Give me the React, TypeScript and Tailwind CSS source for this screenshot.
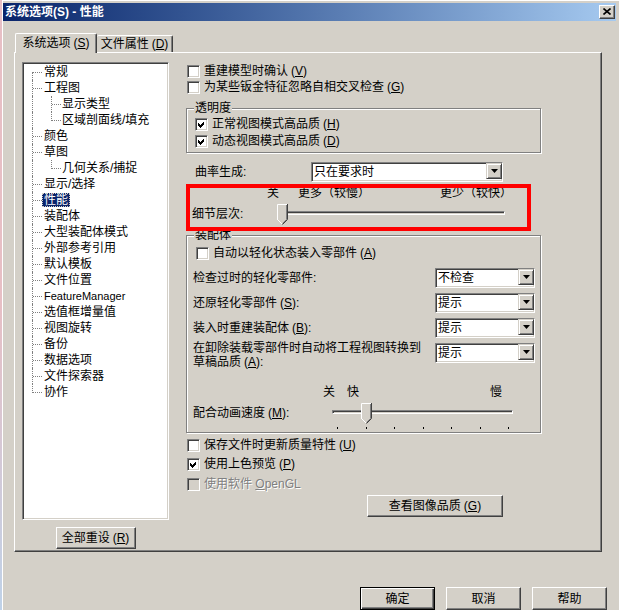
import React from 'react';

const raised =
  'border border-t-white border-l-white border-r-[#404040] border-b-[#404040] shadow-[inset_-1px_-1px_0_#808080]';
const sunken =
  'border border-t-[#808080] border-l-[#808080] border-r-white border-b-white shadow-[inset_1px_1px_0_#404040,inset_-1px_-1px_0_#d4d0c8]';
const etched = 'border border-[#808080] shadow-[inset_1px_1px_0_#fff,1px_1px_0_#fff]';

const Key = ({ k }: { k: string }) => (
  <span className="ml-[3px]">
    (<span className="underline">{k}</span>)
  </span>
);

const Check = ({ checked, disabled }: { checked?: boolean; disabled?: boolean }) => (
  <span
    className={`w-[13px] h-[13px] shrink-0 flex items-center justify-center ${sunken} ${
      disabled ? 'bg-[#d4d0c8]' : 'bg-white'
    }`}
  >
    {checked && (
      <svg width="7" height="7" viewBox="0 0 7 7" shapeRendering="crispEdges">
        <path d="M0 2L2 4L6 0V3L2 7L0 5Z" fill="#000" />
      </svg>
    )}
  </span>
);

const CheckRow = ({
  label,
  checked,
  disabled,
  className = '',
}: {
  label: React.ReactNode;
  checked?: boolean;
  disabled?: boolean;
  className?: string;
}) => (
  <div className={`flex items-center h-[13px] gap-[4px] ${className}`}>
    <Check checked={checked} disabled={disabled} />
    <span className={disabled ? 'text-[#808080] [text-shadow:1px_1px_0_#fff]' : ''}>{label}</span>
  </div>
);

const Combo = ({ value, className }: { value: string; className: string }) => (
  <div className={`flex h-[20px] bg-white ${sunken} ${className}`}>
    <span className="flex-1 pl-[2px] flex items-center">{value}</span>
    <span className="w-[16px] h-[16px] flex items-center justify-center bg-[#d4d0c8] border border-t-[#d4d0c8] border-l-[#d4d0c8] border-r-[#404040] border-b-[#404040] shadow-[inset_1px_1px_0_#fff,inset_-1px_-1px_0_#808080]">
      <svg width="7" height="4" viewBox="0 0 7 4">
        <path d="M0 0H7L3.5 4Z" fill="#000" />
      </svg>
    </span>
  </div>
);

const Thumb = () => (
  <svg width="11" height="21" viewBox="0 0 11 21">
    <path d="M0 0H11V16L5.5 21L0 16Z" fill="#d4d0c8" />
    <polyline points="0.5,16 0.5,0.5 10,0.5" fill="none" stroke="#fff" />
    <polyline points="0.5,15.5 5,20" fill="none" stroke="#fff" />
    <polyline points="9.5,1 9.5,15.5 5.5,19.5" fill="none" stroke="#808080" />
    <polyline points="10.5,0 10.5,15.5 5.5,20.5" fill="none" stroke="#404040" />
  </svg>
);

const Slider = ({ width, thumb }: { width: string; thumb: string }) => (
  <div className={`relative h-[21px] ${width}`}>
    <div className="absolute left-0 right-0 top-[7px] h-[4px] border border-t-[#808080] border-l-[#808080] border-r-white border-b-white shadow-[inset_1px_1px_0_#404040]" />
    <div className={`absolute top-0 ${thumb}`}>
      <Thumb />
    </div>
  </div>
);

const Group = ({
  title,
  className,
  children,
}: {
  title: string;
  className: string;
  children: React.ReactNode;
}) => (
  <div className={`relative flex flex-col ${etched} ${className}`}>
    <span className="absolute -top-[8px] left-[7px] px-[1px] bg-[#d4d0c8]">{title}</span>
    {children}
  </div>
);

const Button = ({
  children,
  className,
  primary,
}: {
  children: React.ReactNode;
  className: string;
  primary?: boolean;
}) => (
  <button
    type="button"
    className={`flex items-center justify-center bg-[#d4d0c8] ${
      primary
        ? 'border border-black shadow-[inset_1px_1px_0_#fff,inset_-1px_-1px_0_#404040,inset_-2px_-2px_0_#808080]'
        : raised
    } ${className}`}
  >
    {children}
  </button>
);

const tree = [
  { label: '常规', level: 0 },
  { label: '工程图', level: 0 },
  { label: '显示类型', level: 1 },
  { label: '区域剖面线/填充', level: 1, lastChild: true },
  { label: '颜色', level: 0 },
  { label: '草图', level: 0 },
  { label: '几何关系/捕捉', level: 1, lastChild: true },
  { label: '显示/选择', level: 0 },
  { label: '性能', level: 0, selected: true },
  { label: '装配体', level: 0 },
  { label: '大型装配体模式', level: 0 },
  { label: '外部参考引用', level: 0 },
  { label: '默认模板', level: 0 },
  { label: '文件位置', level: 0 },
  { label: 'FeatureManager', level: 0 },
  { label: '选值框增量值', level: 0 },
  { label: '视图旋转', level: 0 },
  { label: '备份', level: 0 },
  { label: '数据选项', level: 0 },
  { label: '文件探索器', level: 0 },
  { label: '协作', level: 0 },
];

const Tree = () => (
  <div className={`w-full h-[458px] bg-white ${sunken} pt-[1px] pl-[1px]`}>
    {tree.map((item, i) => {
      const last = i === tree.length - 1;
      return (
        <div key={i} className="relative h-[16px] flex items-center">
          <span
            className={`absolute left-[8px] border-l border-dotted border-[#808080] ${
              i === 0 ? 'top-[8px] bottom-0' : last ? 'top-0 h-[9px]' : 'top-0 bottom-0'
            }`}
          />
          {item.level === 0 ? (
            <span className="absolute left-[9px] top-[8px] w-[9px] border-t border-dotted border-[#808080]" />
          ) : (
            <>
              <span
                className={`absolute left-[27px] top-0 border-l border-dotted border-[#808080] ${
                  item.lastChild ? 'h-[9px]' : 'bottom-0'
                }`}
              />
              <span className="absolute left-[28px] top-[8px] w-[9px] border-t border-dotted border-[#808080]" />
            </>
          )}
          {item.selected ? (
            <span className="ml-[18px] px-[2px] h-[14px] bg-[#0a246a] text-white outline-1 outline-dotted outline-[#d4d0c8] -outline-offset-1">
              {item.label}
            </span>
          ) : (
            <span
              className={`${item.level === 0 ? 'ml-[20px]' : 'ml-[38px]'} ${
                item.label === 'FeatureManager' ? 'text-[11px]' : ''
              }`}
            >
              {item.label}
            </span>
          )}
        </div>
      );
    })}
  </div>
);

export default function App() {
  return (
    <div className="relative flex w-[619px] h-[610px] overflow-hidden bg-[#d4d0c8] text-black text-[12px] leading-[14px] font-['Liberation_Sans','Noto_Sans_CJK_SC',sans-serif]">
      <div className="w-[2px] shrink-0 bg-gradient-to-b from-[#e7bfc5] via-[#e7bfc5] to-[#bfd2e8]" />
      <div className="flex-1 flex flex-col shadow-[inset_1px_1px_0_#fff]">
        {/* title bar */}
        <div className="mt-[3px] ml-[1px] mr-[3px] h-[18px] flex items-center justify-between pl-[2px] pr-[1px] bg-gradient-to-r from-[#0a246a] to-[#a6caf0]">
          <span className="text-white font-bold">系统选项(S) - 性能</span>
          <span className={`w-[16px] h-[14px] flex items-center justify-center bg-[#d4d0c8] ${raised}`}>
            <svg width="8" height="7" viewBox="0 0 8 7">
              <path d="M0.5 0.5L7.5 6.5M7.5 0.5L0.5 6.5" stroke="#000" strokeWidth="1.6" />
            </svg>
          </span>
        </div>

        {/* tabs */}
        <div className="relative z-10 flex items-end mt-[12px] ml-[13px] h-[20px]">
          <div className="w-[82px] h-[20px] flex items-center justify-center bg-[#d4d0c8] border-t border-l border-r border-t-white border-l-white border-r-[#404040] rounded-t-[2px] shadow-[inset_-1px_0_0_#808080]">
            系统选项<Key k="S" />
          </div>
          <div className="w-[76px] h-[17px] mb-[1px] flex items-center justify-center bg-[#d4d0c8] border-t border-r border-t-white border-r-[#404040] rounded-t-[2px] shadow-[inset_-1px_0_0_#808080]">
            文件属性<Key k="D" />
          </div>
        </div>

        {/* tab panel */}
        <div className={`-mt-[1px] ml-[12px] w-[588px] h-[501px] flex ${raised}`}>
          <div className="ml-[7px] mt-[9px] w-[147px] flex flex-col items-center">
            <Tree />
            <Button className="mt-[7px] w-[80px] h-[22px]">
              全部重设<Key k="R" />
            </Button>
          </div>

          <div className="ml-[17px] w-[355px] flex flex-col">
            <CheckRow className="mt-[12px] pl-[1px]" label={<>重建模型时确认<Key k="V" /></>} />
            <CheckRow className="mt-[3px] pl-[1px]" label={<>为某些钣金特征忽略自相交叉检查<Key k="G" /></>} />

            <Group title="透明度" className="mt-[14px] h-[45px] pl-[8px]">
              <CheckRow className="mt-[9px]" checked label={<>正常视图模式高品质<Key k="H" /></>} />
              <CheckRow className="mt-[4px]" checked label={<>动态视图模式高品质<Key k="D" /></>} />
            </Group>

            <div className="mt-[9px] flex items-center pl-[9px]">
              <span className="w-[116px]">曲率生成:</span>
              <Combo value="只在要求时" className="w-[192px]" />
            </div>

            <div className="mt-[4px] flex h-[14px]">
              <span className="ml-[81px]">关</span>
              <span className="ml-[19px]">更多（较慢）</span>
              <span className="ml-[70px]">更少（较快）</span>
            </div>

            <div className="mt-[4px] flex items-center pl-[6px]">
              <span className="w-[85px]">细节层次:</span>
              <Slider width="w-[228px]" thumb="left-0" />
            </div>

            <Group title="装配体" className="mt-[10px] h-[198px] pl-[6px] pr-[5px]">
              <CheckRow className="mt-[11px] ml-[3px]" label={<>自动以轻化状态装入零部件<Key k="A" /></>} />
              <div className="mt-[8px] h-[20px] flex items-center justify-between">
                <span>检查过时的轻化零部件:</span>
                <Combo value="不检查" className="w-[100px]" />
              </div>
              <div className="mt-[5px] h-[20px] flex items-center justify-between">
                <span>
                  还原轻化零部件<Key k="S" />:
                </span>
                <Combo value="提示" className="w-[100px]" />
              </div>
              <div className="mt-[5px] h-[20px] flex items-center justify-between">
                <span>
                  装入时重建装配体<Key k="B" />:
                </span>
                <Combo value="提示" className="w-[100px]" />
              </div>
              <div className="mt-[5px] h-[20px] flex items-start justify-between">
                <span className="-mt-[2px]">
                  在卸除装载零部件时自动将工程视图转换到
                  <br />
                  草稿品质<Key k="A" />:
                </span>
                <Combo value="提示" className="w-[100px]" />
              </div>

              <div className="mt-[22px] flex h-[14px]">
                <span className="ml-[130px]">关</span>
                <span className="ml-[12px]">快</span>
                <span className="ml-[131px]">慢</span>
              </div>
              <div className="mt-[4px] flex items-center">
                <span className="w-[139px]">
                  配合动画速度<Key k="M" />:
                </span>
                <Slider width="w-[181px]" thumb="left-[29px]" />
              </div>
              <div className="mt-[3px] ml-[144px] w-[172px] flex justify-between">
                {[0, 1, 2, 3, 4, 5, 6].map((t) => (
                  <span key={t} className="w-[1px] h-[2px] bg-black" />
                ))}
              </div>
            </Group>

            <CheckRow className="mt-[6px] pl-[1px]" label={<>保存文件时更新质量特性<Key k="U" /></>} />
            <CheckRow className="mt-[6px] pl-[1px]" checked label={<>使用上色预览<Key k="P" /></>} />
            <CheckRow
              className="mt-[7px] pl-[1px]"
              disabled
              label={
                <>
                  使用软件 <span className="underline">O</span>penGL
                </>
              }
            />
            <Button className="mt-[4px] ml-[181px] w-[136px] h-[22px]">
              查看图像品质<Key k="G" />
            </Button>
          </div>
        </div>

        {/* dialog buttons */}
        <div className="mt-[35px] ml-[358px] flex gap-[11px]">
          <Button primary className="w-[75px] h-[23px]">
            确定
          </Button>
          <Button className="w-[75px] h-[23px]">取消</Button>
          <Button className="w-[75px] h-[23px]">帮助</Button>
        </div>
      </div>

      {/* red annotation frame */}
      <div className="absolute left-[186px] top-[184px] w-[345px] h-[47px] border-[4px] border-[#ff0000]" />
    </div>
  );
}
